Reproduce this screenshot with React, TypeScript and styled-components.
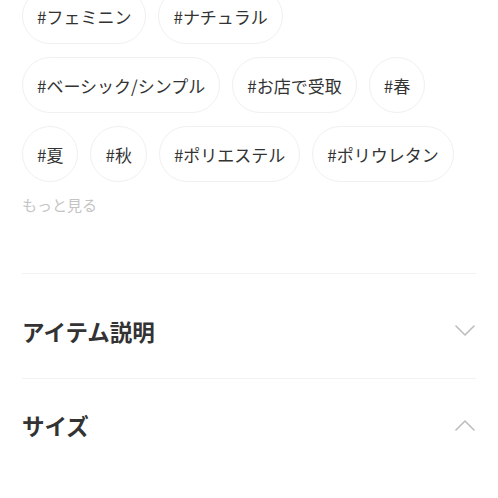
import styled, { createGlobalStyle } from 'styled-components';

const GlobalStyle = createGlobalStyle`
  html, body {
    margin: 0;
    padding: 0;
    background: #fff;
  }
  body {
    font-family: "Noto Sans CJK JP", "Noto Sans", sans-serif;
    color: #333;
    overflow: hidden;
  }
`;

const StyledPage = styled.div`
  margin-top: -12px;
  padding: 0 22px;
`;

const StyledTagList = styled.div`
  display: flex;
  flex-wrap: wrap;
  gap: 13px 12px;
`;

const StyledTag = styled.a`
  display: inline-flex;
  align-items: center;
  height: 56px;
  box-sizing: border-box;
  padding: 0 14px;
  border: 1px solid #f0f0f0;
  border-radius: 28px;
  font-size: 17px;
  color: #333;
  white-space: nowrap;
  text-decoration: none;
`;

const StyledMore = styled.div`
  margin-top: 13px;
  font-size: 15px;
  line-height: 20px;
  color: #c4c4c4;
  padding-bottom: 58px;
`;

const StyledSection = styled.section<{ $top: number; $bottom: number }>`
  display: flex;
  align-items: center;
  justify-content: space-between;
  border-top: 1px solid #f2f2f2;
  padding: ${(p) => p.$top}px 0 ${(p) => p.$bottom}px;
`;

const StyledTitle = styled.h2`
  margin: 0;
  font-size: 22.5px;
  line-height: 30px;
  font-weight: 700;
  color: #333;
`;

const StyledChevron = styled.svg`
  width: 20px;
  height: 12px;
  margin-right: 1px;
`;

const Chevron = ({ up }: { up?: boolean }) => (
  <StyledChevron viewBox="0 0 20 12" fill="none">
    <path
      d={up ? 'M1 11 L10 2 L19 11' : 'M1 1 L10 10 L19 1'}
      stroke="#bdbdbd"
      strokeWidth="1.6"
      strokeLinecap="round"
      strokeLinejoin="round"
    />
  </StyledChevron>
);

const tags = [
  'フェミニン',
  'ナチュラル',
  'ベーシック/シンプル',
  'お店で受取',
  '春',
  '夏',
  '秋',
  'ポリエステル',
  'ポリウレタン',
];

export default function App() {
  return (
    <>
      <GlobalStyle />
      <StyledPage>
        <StyledTagList>
          {tags.map((t) => (
            <StyledTag key={t}>#{t}</StyledTag>
          ))}
        </StyledTagList>
        <StyledMore>もっと見る</StyledMore>
        <StyledSection $top={42} $bottom={32}>
          <StyledTitle>アイテム説明</StyledTitle>
          <Chevron />
        </StyledSection>
        <StyledSection $top={31} $bottom={40}>
          <StyledTitle>サイズ</StyledTitle>
          <Chevron up />
        </StyledSection>
      </StyledPage>
    </>
  );
}
